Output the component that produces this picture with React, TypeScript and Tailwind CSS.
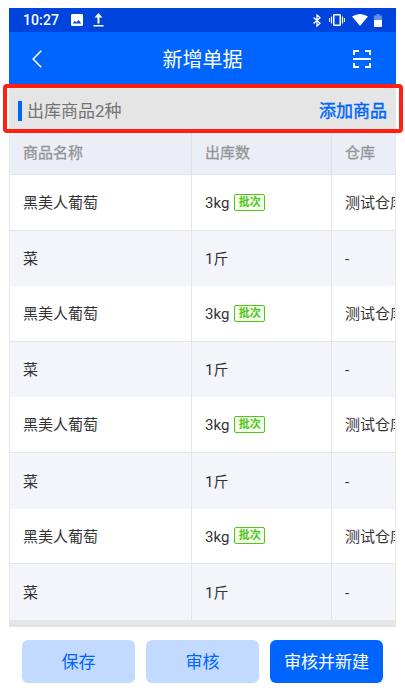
import React from 'react';

const rows = [0, 1, 2, 3].flatMap(() => [
  { name: '黑美人葡萄', qty: '3', unit: 'kg', batch: true, store: '测试仓库' },
  { name: '菜', qty: '1', unit: '斤', batch: false, store: '-' },
]);

function StatusBar() {
  return (
    <div className="flex h-6 shrink-0 items-center bg-[#0043dd] pl-[14px] pr-[14px] text-white">
      <span className="w-[37px] text-[14px] font-medium leading-6 tracking-[0.1px]">10:27</span>
      <svg className="ml-[11px]" width="12" height="12" viewBox="0 0 12 12">
        <path fill="white" fillRule="evenodd" d="M1.3 0h9.4Q12 0 12 1.3v9.4q0 1.3-1.3 1.3H1.3Q0 12 0 10.700V1.300Q0 0 1.300 0ZM1.700 9.500h8.600L7.600 5.900 5.400 8.600 3.900 6.800Z" />
      </svg>
      <svg className="ml-[10px]" width="11" height="14" viewBox="0 0 11 14">
        <path fill="white" d="M5.500 0 9.500 4.500H6.500V10.500H4.500V4.500H1.500ZM0.500 12h10v1.500H.5Z" />
      </svg>
      <div className="flex-1" />
      <svg width="8" height="13" viewBox="0 0 8 13" fill="none" stroke="white" strokeWidth="1.300">
        <path d="M.6 3.500 7 9.200 4 12V1L7 3.800.6 9.500" />
      </svg>
      <svg className="ml-[8px]" width="16" height="12" viewBox="0 0 16 12" fill="none" stroke="white">
        <rect x="4.750" y=".75" width="6.500" height="10.500" rx=".5" strokeWidth="1.500" />
        <path d="M2.500 2.500v7M13.500 2.500v7" strokeWidth="1.200" />
        <path d="M.6 4v4M15.400 4v4" strokeWidth="1" />
      </svg>
      <svg className="ml-[7px]" width="16" height="12" viewBox="0 0 16 12">
        <path fill="white" d="M0 2.500Q8-2.500 16 2.500L8 12Z" />
      </svg>
      <svg className="ml-[6px]" width="8" height="13" viewBox="0 0 8 13">
        <path fill="#6690ed" d="M2.500 0h3v1.500H8V6H0V1.500h2.500Z" />
        <path fill="white" d="M0 6h8v6.300q0 .7-.7.7H.7Q0 13 0 12.300Z" />
      </svg>
    </div>
  );
}

function TitleBar() {
  return (
    <header className="grid h-[52px] shrink-0 grid-cols-[1fr_auto_1fr] items-center bg-[#0065ff] text-white">
      <svg className="ml-[23px] mt-[2px]" width="10" height="18" viewBox="0 0 10 18" fill="none" stroke="white" strokeWidth="1.600">
        <path d="M9.200.8 1.200 9l8 8.200" />
      </svg>
      <h1 className="mt-[4px] text-[20px] leading-7">新增单据</h1>
      <svg className="mr-[25px] mt-[2px] justify-self-end" width="18" height="18" viewBox="0 0 18 18" fill="none" stroke="white" strokeWidth="2">
        <path d="M1 5V1h5M12 1h5v4M1 13v4h5M12 17h5v-4M0 9h18" />
      </svg>
    </header>
  );
}

export default function App() {
  return (
    <div className="h-[700px] w-[405px] overflow-hidden bg-white pt-2 font-[Roboto,'Noto_Sans_CJK_SC',sans-serif]">
      <div className="ml-[9px] flex h-[692px] w-[387px] flex-col">
        <StatusBar />
        <TitleBar />
        <section className="relative flex h-[49px] shrink-0 items-center justify-between bg-[#e5e5e5] pl-[9px] pr-[9px]">
          <div className="flex items-center pt-[4px]">
            <span className="h-5 w-1 bg-[#0065ff]" />
            <span className="ml-[5px] text-[17px] leading-6 text-[#747474]">出库商品2种</span>
          </div>
          <button className="pt-[5px] text-[17px] leading-6 text-[#0065ff] [-webkit-text-stroke:0.4px]">添加商品</button>
          <div className="pointer-events-none absolute -left-[6px] top-0 h-[49px] w-[400px] rounded-[4px] border-4 border-[#ff2013]" />
        </section>
        <div className="h-[487px] shrink-0 overflow-hidden border-x border-[#e8e8e9]">
          <div className="grid h-[42px] grid-cols-[182px_140px_1fr] border-b border-[#e5e6e8] bg-[#ebeef6] text-[15px] text-[#939497] [-webkit-text-stroke:0.3px]">
            {['商品名称', '出库数', '仓库'].map((title, i) => (
              <div key={title} className={`flex items-center pl-[13px] ${i < 2 ? 'border-r border-[#e2e3e6]' : ''}`}>{title}</div>
            ))}
          </div>
          {rows.map((row, i) => (
            <div
              key={i}
              className={`grid h-[55.62px] grid-cols-[182px_140px_1fr] text-[15px] text-[#333] ${i % 2 ? 'bg-[#f4f5fa]' : 'border-b border-[#e5e5e5] bg-white'}`}
            >
              <div className="flex items-center border-r border-[#e5e5e5] pl-[13px] pt-[2px]">{row.name}</div>
              <div className="flex items-center border-r border-[#e5e5e5] pl-[13px] pt-[2px]">
                <span>{row.qty}{row.unit}</span>
                {row.batch && (
                  <span className="mb-[2px] ml-[5px] flex h-[17px] w-[31px] items-center justify-center rounded-[2px] border border-[#52c41a] bg-[#f4ffec] text-[11px] font-bold leading-none text-[#52c41a]">批次</span>
                )}
              </div>
              <div className="flex items-center overflow-hidden whitespace-nowrap pl-[13px] pt-[2px]">{row.store}</div>
            </div>
          ))}
        </div>
        <div className="h-[7px] shrink-0 bg-[#e5e5e5]" />
        <footer className="grid grid-cols-3 gap-[11px] px-[13px] pt-[13px] text-[17px]">
          <button className="h-[43px] rounded-[6px] bg-[#c2daff] pt-[2px] text-[#0065ff]">保存</button>
          <button className="h-[43px] rounded-[6px] bg-[#c2daff] pt-[2px] text-[#0065ff]">审核</button>
          <button className="h-[43px] rounded-[6px] bg-[#0065ff] pt-[2px] text-white">审核并新建</button>
        </footer>
      </div>
    </div>
  );
}
